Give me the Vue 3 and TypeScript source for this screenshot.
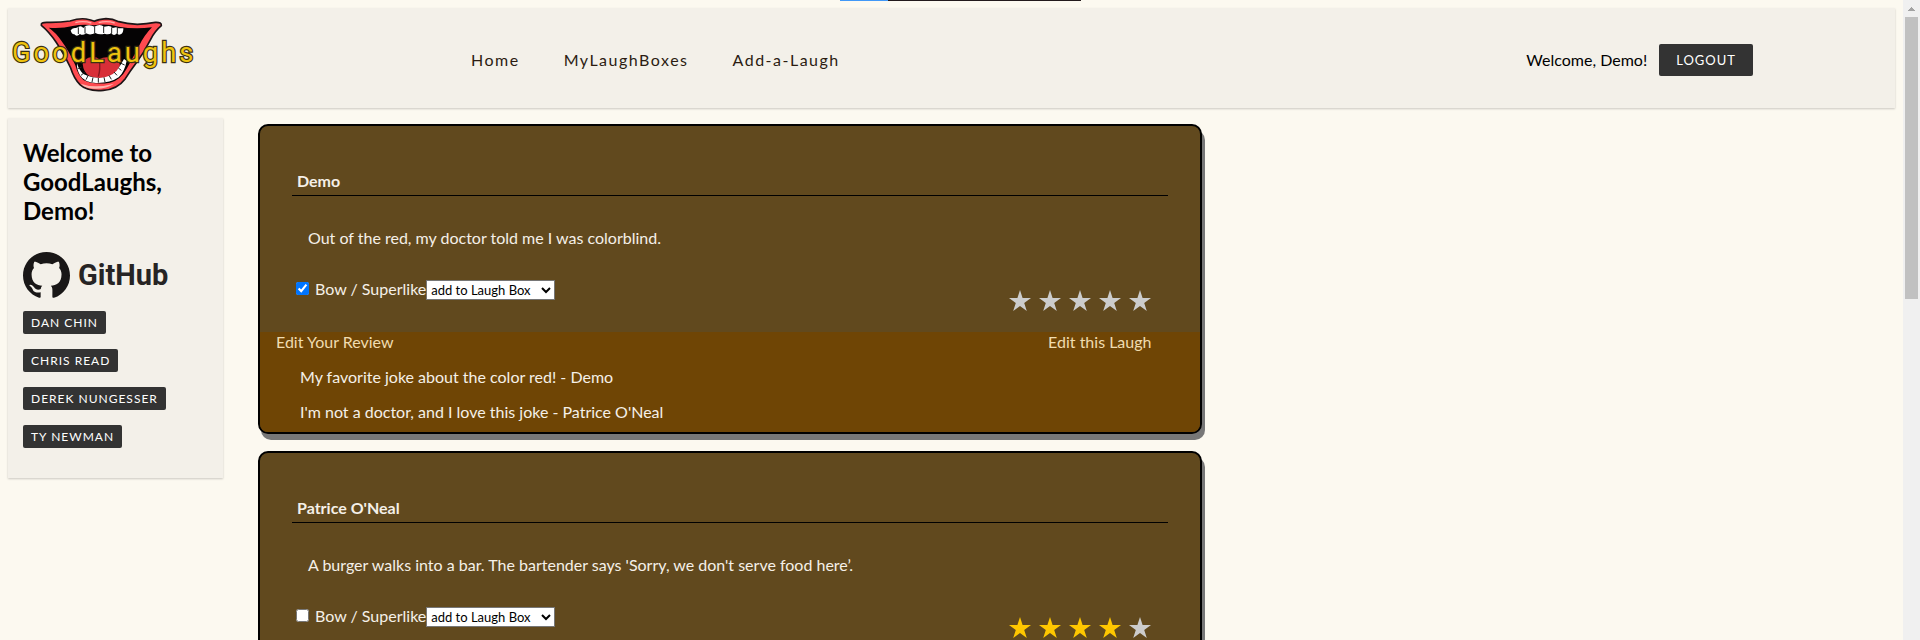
<script setup lang="ts">
import { ref } from 'vue'

interface Laugh {
  id: number
  author: string
  joke: string
  superlike: boolean
  rating: number
  editable: boolean
  reviews: string[]
}

const links: string[] = ['Home', 'MyLaughBoxes', 'Add-a-Laugh']
const developers: string[] = ['Dan Chin', 'Chris Read', 'Derek Nungesser', 'Ty Newman']

const laughs = ref<Laugh[]>([
  {
    id: 1,
    author: 'Demo',
    joke: 'Out of the red, my doctor told me I was colorblind.',
    superlike: true,
    rating: 0,
    editable: true,
    reviews: [
      'My favorite joke about the color red! - Demo',
      "I'm not a doctor, and I love this joke - Patrice O'Neal",
    ],
  },
  {
    id: 2,
    author: "Patrice O'Neal",
    joke: "A burger walks into a bar. The bartender says 'Sorry, we don't serve food here’.",
    superlike: false,
    rating: 4,
    editable: false,
    reviews: [],
  },
])
</script>

<template>
  <div class="window">
    <div class="page">
      <header class="topbar">
        <a class="brand" href="#" aria-label="GoodLaughs">
          <svg class="brand-logo" viewBox="24 30 576 264" aria-hidden="true">
            <path
              d="M124 76 Q122 67 140 67 Q178 68 210 63 Q238 54 258 57 Q273 60 283 64 Q295 58 318 56 Q338 56 356 65 Q380 72 412 73 Q440 71 466 67 Q486 66 484 77 Q464 94 452 118 Q432 158 408 190 Q390 214 376 236 Q352 268 310 271 Q262 275 240 254 Q222 236 212 204 Q190 158 168 126 Q148 96 124 76Z"
              fill="#ff4a50" stroke="#1d1416" stroke-width="5" stroke-linejoin="round"
            />
            <path
              d="M146 83 Q186 86 218 78 Q250 71 282 76 Q320 70 356 80 Q404 89 456 82 Q432 106 416 140 Q396 178 380 206 Q362 240 330 248 Q280 256 250 240 Q234 226 226 196 Q208 154 184 122 Q168 98 146 83Z"
              fill="#050304"
            />
            <path
              d="M212 91 Q219 82 228 84 L236 80 Q244 76 250 84 L256 78 Q270 72 283 80 Q300 70 312 80 L326 78 Q334 78 338 84 L348 82 L356 85 L370 85 Q371 99 362 103 Q355 107 351 100 Q341 110 334 99 Q326 106 314 101 Q298 106 286 99 Q270 107 258 100 Q248 108 240 102 Q230 112 223 103 Q215 104 212 91Z"
              fill="#fff"
            />
            <path d="M235 82v20M255 80v20M284 80v20M311 79v20M335 82v18M352 83v18" stroke="#222" stroke-width="3" />
            <path d="M248 192 Q252 174 276 171 Q290 170 298 178 Q310 170 328 172 Q356 178 360 196 Q350 224 326 231 Q294 238 268 228 Q250 216 248 192Z" fill="#d82f38" />
            <path d="M298 180 Q302 206 295 230" fill="none" stroke="#841820" stroke-width="4" />
            <path
              d="M231 190 Q236 209 250 222 Q270 233 298 234 Q332 231 350 212 Q362 196 372 177 L380 182 Q374 215 356 232 Q330 250 288 249 Q252 247 240 226 Q229 206 231 190Z"
              fill="#fff"
            />
            <path d="M233 206l12-5M243 226l11-9M258 239l6-12M276 246l3-14M295 248v-14M315 246l-3-14M334 238l-7-12M351 226l-9-10M364 211l-9-7M374 195l-11-5" stroke="#222" stroke-width="3" />
            <path d="M242 251 Q284 267 342 251 Q318 268 280 266 Q254 265 242 251Z" fill="#ffb5ae" />
            <path d="M226 68 Q250 61 274 69 M296 68 Q320 61 344 69" fill="none" stroke="#ffaaa6" stroke-width="4" />
            <text class="brand-name" x="36" y="186">GoodLaughs</text>
          </svg>
        </a>
        <nav class="links" aria-label="Main">
          <a v-for="link in links" :key="link" href="#">{{ link }}</a>
        </nav>
        <div class="account">
          <span>Welcome, Demo!</span>
          <button type="button" class="logout">LOGOUT</button>
        </div>
      </header>

      <div class="content">
        <aside class="sidebar">
          <h2>Welcome to GoodLaughs, Demo!</h2>
          <a class="github" href="#">
            <svg viewBox="0 0 16 16" aria-hidden="true">
              <path
                fill="#191717"
                d="M8 0C3.58 0 0 3.58 0 8c0 3.54 2.29 6.53 5.47 7.59.4.07.55-.17.55-.38 0-.19-.01-.82-.01-1.49-2.01.37-2.53-.49-2.69-.94-.09-.23-.48-.94-.82-1.13-.28-.15-.68-.52-.01-.53.63-.01 1.08.58 1.23.82.72 1.21 1.87.87 2.33.66.07-.52.28-.87.51-1.07-1.78-.2-3.64-.89-3.64-3.95 0-.87.31-1.59.82-2.15-.08-.2-.36-1.02.08-2.12 0 0 .67-.21 2.2.82.64-.18 1.32-.27 2-.27s1.36.09 2 .27c1.53-1.04 2.2-.82 2.2-.82.44 1.1.16 1.92.08 2.12.51.56.82 1.27.82 2.15 0 3.07-1.87 3.75-3.65 3.95.29.25.54.73.54 1.48 0 1.07-.01 1.93-.01 2.2 0 .21.15.46.55.38A8.01 8.01 0 0 0 16 8c0-4.42-3.58-8-8-8z"
              />
            </svg>
            <span>GitHub</span>
          </a>
          <ul class="developers">
            <li v-for="name in developers" :key="name">
              <a href="#">{{ name.toUpperCase() }}</a>
            </li>
          </ul>
        </aside>

        <main class="feed">
          <article v-for="laugh in laughs" :key="laugh.id" class="card">
            <div class="card-body">
              <h3>{{ laugh.author }}</h3>
              <p class="joke">{{ laugh.joke }}</p>
              <div class="actions">
                <div class="controls">
                  <input :id="`superlike-${laugh.id}`" v-model="laugh.superlike" type="checkbox" />
                  <label :for="`superlike-${laugh.id}`">Bow / Superlike</label>
                  <select aria-label="Laugh Box">
                    <option>add to Laugh Box</option>
                  </select>
                </div>
                <div class="stars" role="group" aria-label="Rating">
                  <button
                    v-for="n in 5"
                    :key="n"
                    type="button"
                    :class="['star', { lit: n <= laugh.rating }]"
                    :aria-label="`Rate ${n}`"
                    @click="laugh.rating = n"
                  >
                    <svg viewBox="0 0 22 21" aria-hidden="true">
                      <path d="M11 0l2.6 8H22l-6.8 4.9 2.6 8.1L11 16l-6.8 5 2.6-8.1L0 8h8.4z" />
                    </svg>
                  </button>
                </div>
              </div>
            </div>
            <div v-if="laugh.reviews.length" class="reviews">
              <div class="edit-row">
                <a href="#">Edit Your Review</a>
                <a v-if="laugh.editable" href="#">Edit this Laugh</a>
              </div>
              <p v-for="review in laugh.reviews" :key="review">{{ review }}</p>
            </div>
          </article>
        </main>
      </div>
      <div class="progress"><i></i></div>
    </div>
    <div class="scrollbar" aria-hidden="true">
      <svg viewBox="0 0 7 4"><path d="M3 0h1v1h1v1h1v1h1v1H0V3h1V2h1V1h1z" fill="#a3a3a3" /></svg>
      <div class="thumb"></div>
    </div>
  </div>
</template>

<style>
body {
  margin: 0;
  background: #fcf9f0;
}
</style>

<style scoped>
.window {
  display: flex;
  height: 100vh;
  overflow: hidden;
  font: 16px/19px Lato, sans-serif;
  color: #000;
}
.page {
  position: relative;
  flex: 1;
  min-width: 0;
  box-sizing: border-box;
  padding: 8px;
}
a {
  color: inherit;
  text-decoration: none;
}
button {
  border: 0;
  cursor: pointer;
}
.progress {
  position: absolute;
  top: 0;
  left: 840px;
  width: 241px;
  height: 1px;
  background: #231a1c;
}
.progress i {
  display: block;
  width: 48px;
  height: 1px;
  background: #4198f7;
}
.topbar {
  display: flex;
  align-items: center;
  height: 100px;
  background: #f3f0e9;
  box-shadow: 0 1px 2px rgba(0, 0, 0, 0.2);
}
.brand {
  flex: 0 0 463px;
  align-self: flex-start;
  padding-top: 2px;
}
.brand-logo {
  display: block;
  width: 192px;
  height: 88px;
}
.brand-name {
  font: 400 82px Roboto, sans-serif;
  letter-spacing: 9px;
  fill: #eec30f;
  stroke: #3a3013;
  stroke-width: 7px;
  paint-order: stroke;
}
.links {
  display: flex;
  flex: 1;
  gap: 44px;
  padding-top: 3px;
  color: #2b1c12;
  letter-spacing: 1.5px;
}
.account {
  display: flex;
  align-items: center;
  gap: 12px;
  padding-top: 3px;
  margin-right: 142px;
}
.logout {
  height: 32px;
  padding: 0 17px;
  border-radius: 2px;
  background: #333;
  color: #fff;
  font: 13px Lato, sans-serif;
  letter-spacing: 1px;
}
.content {
  display: flex;
  align-items: flex-start;
  padding-top: 10px;
}
.sidebar {
  box-sizing: border-box;
  flex: 0 0 215px;
  padding: 20px 15px 30px;
  background: #f3f0e9;
  box-shadow: 0 1px 2px rgba(0, 0, 0, 0.2);
}
.sidebar h2 {
  margin: 0;
  font-size: 24px;
  line-height: 29px;
}
.github {
  display: flex;
  align-items: center;
  gap: 8px;
  height: 48px;
  margin-top: 26px;
  color: #262424;
  font: 700 29px Roboto, sans-serif;
}
.github svg {
  width: 47px;
  height: 47px;
}
.developers {
  display: grid;
  justify-items: start;
  gap: 15px;
  margin: 12px 0 0;
  padding: 0;
  list-style: none;
}
.developers a {
  display: block;
  padding: 0 8px;
  border-radius: 2px;
  background: #333;
  color: #fff;
  font-size: 12px;
  line-height: 23px;
  letter-spacing: 1px;
}
.feed {
  display: grid;
  flex: 0 0 50%;
  gap: 17px;
  margin-left: 35px;
  padding-top: 6px;
}
.card {
  overflow: hidden;
  border: 2px solid #000;
  border-radius: 10px;
  background: #61491e;
  box-shadow: 3px 6px #777;
  color: #f5f0e8;
}
.card-body {
  padding: 45px 32px 21px;
}
.card h3 {
  margin: 0;
  padding: 0 5px 5px;
  border-bottom: 1px solid #000;
  font-size: 16px;
}
.joke {
  margin: 32px 16px;
}
.actions {
  display: flex;
  justify-content: space-between;
  height: 32px;
  padding: 0 17px 0 4px;
}
.controls {
  display: flex;
  align-items: flex-start;
}
.controls input {
  width: 13px;
  height: 13px;
  margin: 3px 6px 0 0;
}
.controls select {
  width: 129px;
  height: 20px;
  margin-top: 1px;
  padding: 0;
  border: 1px solid #767676;
  border-radius: 0;
  background: #fff;
  color: #000;
  font: 13px Lato, sans-serif;
}
.stars {
  display: flex;
  align-items: flex-end;
  gap: 8px;
}
.star {
  padding: 0;
  background: none;
}
.star svg {
  display: block;
  width: 22px;
  height: 21px;
  fill: #ccc;
}
.star.lit svg {
  fill: #ffc700;
}
.reviews {
  padding-bottom: 11px;
  background: #6f4505;
}
.edit-row {
  display: flex;
  justify-content: space-between;
  padding: 0 48px 0 16px;
  color: #f0dcb0;
}
.reviews p {
  margin: 16px 40px 0;
}
.scrollbar {
  flex: 0 0 17px;
  background: #f0f0f0;
}
.scrollbar svg {
  display: block;
  width: 7px;
  height: 4px;
  margin: 7px auto 6px;
}
.thumb {
  width: 13px;
  height: 44vh;
  margin: 0 auto;
  background: #c1c1c1;
}
</style>
